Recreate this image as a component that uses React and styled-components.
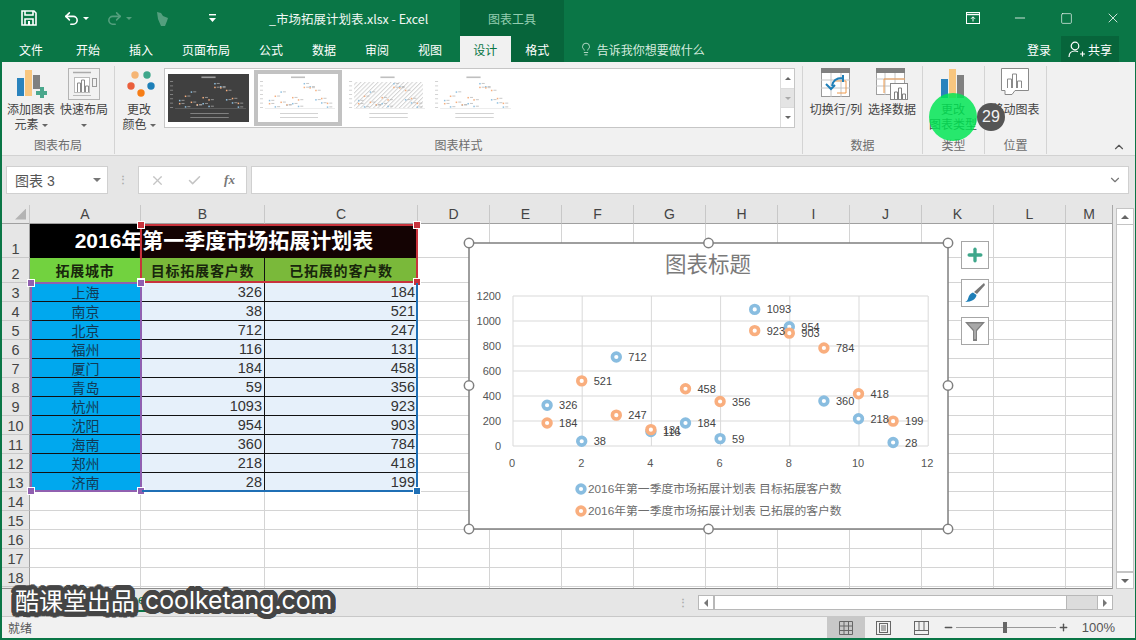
import React from 'react';
import styled, { createGlobalStyle } from 'styled-components';
import { Undo2, Redo2, Lightbulb, X, Check, ChevronDown, ChevronUp, Minus, Square, Plus } from 'lucide-react';

const CJK = '"Noto Sans CJK SC", "Liberation Sans", sans-serif';
const LATIN_CJK = '"Liberation Sans", "Noto Sans CJK SC", sans-serif';
const GREEN = '#0a7646';

// round dark halo behind the watermark letters
const halo = [];
for (let i = 0; i < 24; i++) {
  const a = (i / 24) * Math.PI * 2;
  halo.push(`${(Math.cos(a) * 5).toFixed(1)}px ${(Math.sin(a) * 5).toFixed(1)}px 0 #454545`);
  halo.push(`${(Math.cos(a) * 2.5).toFixed(1)}px ${(Math.sin(a) * 2.5).toFixed(1)}px 0 #454545`);
}

const GlobalStyle = createGlobalStyle`
  html, body {
    margin: 0;
    width: 1136px;
    height: 640px;
    overflow: hidden;
    background: #f1f1f1;
    font-family: ${LATIN_CJK};
  }
`;

const Root = styled.div`
  position: relative;
  width: 1136px;
  height: 640px;
  overflow: hidden;
`;

const Window = styled.div`
  box-sizing: border-box;
  width: 1136px;
  height: 640px;
  display: flex;
  flex-direction: column;
  border-left: 2px solid ${GREEN};
  border-right: 1px solid ${GREEN};
  border-bottom: 2px solid ${GREEN};
`;

/* title bar */
const TitleBar = styled.div`
  height: 36px;
  flex: none;
  background: ${GREEN};
  display: flex;
  align-items: center;
  color: #fff;
`;

const QuickIcon = styled.span`
  display: inline-flex;
  margin-left: ${p => p.$left}px;
  opacity: ${p => (p.$dim ? 0.3 : 1)};
`;

const DocTitle = styled.div`
  margin-left: ${p => p.$left}px;
  width: 191px;
  font: 12.5px ${CJK};
  color: #f1f8f4;
  white-space: nowrap;
`;

const ToolTab = styled.div`
  align-self: stretch;
  width: 104px;
  background: #07653b;
  color: #93cdb0;
  font: 12px ${CJK};
  display: flex;
  align-items: center;
  justify-content: center;
`;

const WinButtons = styled.div`
  margin-left: auto;
  margin-right: 14px;
  display: flex;
  align-items: center;
  gap: 32px;
`;

const Caret = styled.span`
  display: inline-block;
  width: 0;
  height: 0;
  border-left: ${p => p.$size || 3}px solid transparent;
  border-right: ${p => p.$size || 3}px solid transparent;
  ${p => (p.$up ? 'border-bottom' : 'border-top')}: ${p => p.$size || 3}px solid ${p => p.$color || '#666'};
  margin-left: ${p => p.$left || 0}px;
  vertical-align: middle;
`;

/* tabs */
const TabBar = styled.div`
  height: 26px;
  flex: none;
  background: ${GREEN};
  display: flex;
  align-items: stretch;
  padding-left: 2.5px;
`;

const Tab = styled.div`
  padding: 0 ${p => p.$pad || 14.5}px;
  display: flex;
  align-items: center;
  font: 12px ${CJK};
  color: ${p => (p.$active ? '#0a7646' : '#fff')};
  background: ${p => (p.$active ? '#f1f1f1' : p.$dark ? '#07653b' : 'transparent')};
  margin-left: ${p => p.$left || 0}px;

  &:first-child {
    margin-right: 4px;
  }
`;

const TellMe = styled.div`
  margin-left: 15px;
  display: flex;
  align-items: center;
  gap: 4px;
  color: #d5ebdf;
  font: 12px ${CJK};
`;

const Login = styled.div`
  margin-left: auto;
  margin-right: 10px;
  display: flex;
  align-items: center;
  color: #fff;
  font: 12px ${CJK};
`;

const ShareBtn = styled.div`
  width: 58px;
  margin-right: 16px;
  background: #07653b;
  color: #fff;
  font: 12px ${CJK};
  display: flex;
  align-items: center;
  justify-content: center;
  gap: 3px;
`;

/* ribbon */
const Ribbon = styled.div`
  height: 94px;
  flex: none;
  box-sizing: border-box;
  background: #f1f1f1;
  border-bottom: 1px solid #d2d2d2;
  display: flex;
  padding-top: 4px;
`;

const Group = styled.div`
  box-sizing: border-box;
  width: ${p => p.$width}px;
  height: 88px;
  flex: none;
  border-right: 1px solid #d4d4d4;
  display: flex;
  flex-direction: column;
`;

const GroupBody = styled.div`
  box-sizing: border-box;
  height: 70px;
  flex: none;
  padding: 2px 0 0 ${p => p.$pad || 0}px;
  display: flex;
  align-items: flex-start;
  gap: ${p => p.$gap || 0}px;
`;

const GroupLabel = styled.div`
  text-align: center;
  font: 12px/18px ${CJK};
  color: #6d6d6d;
`;

const RibbonBtn = styled.div`
  width: ${p => p.$width}px;
  flex: none;
  display: flex;
  flex-direction: column;
  align-items: center;
`;

const BtnIcon = styled.div`
  height: 33px;
  display: flex;
  align-items: flex-start;
  justify-content: center;
`;

const BtnText = styled.div`
  font: 12px/15px ${CJK};
  color: #444;
  text-align: center;
  white-space: nowrap;
`;

const Gallery = styled.div`
  box-sizing: border-box;
  width: 631px;
  height: 60px;
  margin-left: 7px;
  background: #fff;
  border: 1px solid #c6c6c6;
  display: flex;
  align-items: center;
`;

const Thumbs = styled.div`
  flex: 1;
  display: flex;
  align-items: center;
  padding-left: 3px;
  gap: 5px;
`;

const Thumb = styled.div`
  box-sizing: border-box;
  width: ${p => (p.$selected ? 88 : 81)}px;
  height: ${p => (p.$selected ? 56 : 48)}px;
  border: ${p => (p.$selected ? '4px solid #c2c2c2' : 'none')};
  flex: none;
  display: flex;
`;

const GalleryScroll = styled.div`
  align-self: stretch;
  width: 13px;
  flex: none;
  display: flex;
  flex-direction: column;
  border-left: 1px solid #dcdcdc;
`;

const ScrollCell = styled.div`
  flex: 1;
  display: flex;
  align-items: center;
  justify-content: center;
  background: ${p => (p.$grey ? '#e4e4e4' : '#fff')};
  border-bottom: ${p => (p.$last ? 'none' : '1px solid #dcdcdc')};
`;

const Collapse = styled.div`
  margin: auto 9px 0 auto;
  color: #555;
  display: flex;
  padding-bottom: 1px;
`;

/* formula bar */
const FormulaBand = styled.div`
  height: 49px;
  flex: none;
  background: #e6e6e6;
  display: flex;
  align-items: flex-start;
  padding: 10px 6px 0 4px;
  box-sizing: border-box;
`;

const NameBox = styled.div`
  box-sizing: border-box;
  width: 102px;
  height: 28px;
  background: #fff;
  border: 1px solid #d0d0d0;
  display: flex;
  align-items: center;
  justify-content: space-between;
  padding: 0 6px 0 8px;
  font: 14px ${LATIN_CJK};
  color: #555;
`;

const GripDots = styled.div`
  width: 30px;
  height: 28px;
  display: flex;
  align-items: center;
  justify-content: center;
  color: #aaa;
  font: bold 10px/4px ${LATIN_CJK};
`;

const FxBox = styled.div`
  box-sizing: border-box;
  width: 109px;
  height: 28px;
  background: #fff;
  border: 1px solid #d0d0d0;
  display: flex;
  align-items: center;
  justify-content: space-around;
  color: #c4c4c4;
`;

const FxText = styled.span`
  font: italic bold 13px "Liberation Serif", serif;
  color: #777;
`;

const FormulaInput = styled.div`
  box-sizing: border-box;
  flex: 1;
  height: 28px;
  margin-left: 4px;
  background: #fff;
  border: 1px solid #d0d0d0;
  display: flex;
  align-items: center;
  justify-content: flex-end;
  padding-right: 6px;
  color: #777;
`;

/* sheet */
const SheetArea = styled.div`
  height: 384px;
  flex: none;
  display: flex;
  background: #e6e6e6;
`;

const SheetGrid = styled.div`
  width: 1111px;
  height: 384px;
  overflow: hidden;
  display: grid;
  grid-template-columns: 28px 111px 124px 153px repeat(9, 72px) 47px;
  grid-template-rows: 18.5px 34px 25px repeat(16, 19px);
  background: #fff;
  border-bottom: 1px solid #8c8c8c;
  box-sizing: border-box;
  border-right: 1px solid #a8a8a8;
`;

const Corner = styled.div`
  background: #e6e6e6;
  border-bottom: 1px solid #a0a0a0;
  border-right: 1px solid #c8c8c8;
  display: flex;
  align-items: flex-end;
  justify-content: flex-end;
  padding: 0 3px 3px 0;
`;

const CornerMark = styled.span`
  width: 11px;
  height: 11px;
  background: #b4b4b4;
  clip-path: polygon(100% 0, 100% 100%, 0 100%);
`;

const ColHead = styled.div`
  background: #e6e6e6;
  border-bottom: 1px solid #a0a0a0;
  border-right: 1px solid #c8c8c8;
  font: 14px/19px ${LATIN_CJK};
  color: #444;
  text-align: center;
`;

const RowHead = styled.div`
  background: #e6e6e6;
  border-bottom: 1px solid #c8c8c8;
  border-right: 1px solid #a0a0a0;
  font: 14.5px ${LATIN_CJK};
  color: #444;
  display: flex;
  align-items: flex-end;
  justify-content: center;
`;

const Blank = styled.div`
  border-right: 1px solid #d4d4d4;
  border-bottom: 1px solid #d4d4d4;
`;

const TitleCell = styled.div`
  grid-column: span 3;
  background: linear-gradient(90deg, #000 28%, #140303 28%);
  color: #fff;
  font: bold 21px/34px ${LATIN_CJK};
  text-align: center;
  white-space: nowrap;
`;

const HeadCell = styled.div`
  background: ${p => p.$bg};
  color: #18260c;
  font: bold 14px/25px ${CJK};
  letter-spacing: 0.8px;
  text-align: center;
  border-right: 1px solid #111;
`;

const CityCell = styled.div`
  background: #00a8ee;
  color: #123a55;
  font: 14px/18px ${CJK};
  text-align: center;
  border-bottom: 1px solid #111;
  white-space: nowrap;
  overflow: hidden;
`;

const NumCell = styled.div`
  background: #e6f0fa;
  color: #333;
  font: 14.5px/19px "Liberation Sans", sans-serif;
  text-align: right;
  padding-right: 2px;
  border-bottom: 1px solid #111;
  border-right: 1px solid #111;
`;

const VScroll = styled.div`
  flex: 1;
  display: flex;
  flex-direction: column;
  padding: 3px 1px 0 3px;
`;

const VBtn = styled.div`
  height: 15px;
  flex: none;
  background: #fff;
  border: 1px solid #c4c4c4;
  display: flex;
  align-items: center;
  justify-content: center;
`;

const VThumb = styled.div`
  height: 346px;
  flex: none;
  background: #fff;
  border: 1px solid #c4c4c4;
  border-top: none;
`;

const VTrack = styled.div`
  flex: 1;
`;

/* sheet tabs */
const TabsBar = styled.div`
  height: 28px;
  flex: none;
  box-sizing: border-box;
  background: #e6e6e6;
  border-bottom: 1px solid #c8c8c8;
  display: flex;
  align-items: stretch;
`;

const SheetTab = styled.div`
  width: 70px;
  margin-left: ${p => p.$left || 0}px;
  box-sizing: border-box;
  display: flex;
  align-items: center;
  justify-content: center;
  font: 13px ${LATIN_CJK};
  color: ${p => (p.$active ? '#0a7646' : '#555')};
  border-bottom: ${p => (p.$active ? '2px solid #0a7646' : 'none')};
  border-right: 1px solid #bbb;
  margin-bottom: 4px;
`;

const HScrollWrap = styled.div`
  margin: 6px 22px 0 auto;
  display: flex;
  align-items: flex-start;
`;

const HDots = styled.div`
  width: 20px;
  color: #aaa;
  font: bold 10px/5px ${LATIN_CJK};
  padding-top: 5px;
`;

const HScroll = styled.div`
  box-sizing: border-box;
  width: 415px;
  height: 15px;
  display: flex;
  border: 1px solid #b8b8b8;
  background: #dcdcdc;
`;

const HBtn = styled.div`
  width: 14px;
  background: #fff;
  display: flex;
  align-items: center;
  justify-content: center;
  margin-left: ${p => (p.$end ? 'auto' : 0)};
  border-left: ${p => (p.$end ? '1px solid #b8b8b8' : 'none')};
`;

const HThumb = styled.div`
  width: 351px;
  background: #fff;
  border-left: 2px solid #b8b8b8;
  border-right: 1px solid #b8b8b8;
`;

const Arrow = styled.span`
  width: 0;
  height: 0;
  border-top: 4px solid transparent;
  border-bottom: 4px solid transparent;
  ${p => (p.$right ? 'border-left' : 'border-right')}: 4px solid #777;
`;

/* status bar */
const StatusBar = styled.div`
  flex: 1;
  background: #f1f1f1;
  display: flex;
  align-items: stretch;
  color: #555;
`;

const Ready = styled.div`
  margin-left: 6px;
  font: 12px ${CJK};
  display: flex;
  align-items: center;
`;

const ViewBtns = styled.div`
  margin-left: auto;
  display: flex;
  align-items: stretch;
`;

const ViewBtn = styled.div`
  width: 38px;
  display: flex;
  align-items: center;
  justify-content: center;
  background: ${p => (p.$active ? '#c8c8c8' : 'transparent')};
`;

const ZoomRow = styled.div`
  display: flex;
  align-items: center;
  margin-left: 2.5px;
  margin-right: 12.5px;
  gap: 2px;
`;

const ZoomTrack = styled.div`
  position: relative;
  width: 100px;
  height: 1px;
  background: #999;
`;

const ZoomThumb = styled.span`
  position: absolute;
  left: 47px;
  top: -5px;
  width: 4px;
  height: 11px;
  background: #666;
`;

const ZoomText = styled.div`
  align-self: center;
  margin-right: 20px;
  font: 13px "Liberation Sans", sans-serif;
  color: #555;
`;

/* overlays */
const Selection = styled.div`
  position: absolute;
  box-sizing: border-box;
  left: ${p => p.$x}px;
  top: ${p => p.$y}px;
  width: ${p => p.$w}px;
  height: ${p => p.$h}px;
  border: 2px solid ${p => p.$color};
  ${p => (p.$open ? 'border-left: none; border-top: none;' : '')}
  pointer-events: none;
`;

const Handle = styled.span`
  position: absolute;
  width: 6px;
  height: 6px;
  background: ${p => p.$color};
  border: 1px solid #fff;
  ${p => (p.$bottom ? 'bottom: -5px' : 'top: -5px')};
  ${p => (p.$right ? 'right: -5px' : 'left: -5px')};
`;

const ChartFrame = styled.div`
  position: absolute;
  left: 469px;
  top: 243px;
  width: 479px;
  height: 286px;
`;

const ChartSvg = styled.svg`
  display: block;
  overflow: visible;
`;

const SideBtn = styled.div`
  position: absolute;
  left: 961px;
  top: ${p => p.$y}px;
  box-sizing: border-box;
  width: 28px;
  height: 28px;
  background: #fff;
  border: 1px solid #a6a6a6;
  display: flex;
  align-items: center;
  justify-content: center;
`;

const Spot = styled.div`
  position: absolute;
  left: 929px;
  top: 93px;
  width: 48px;
  height: 48px;
  border-radius: 50%;
  background: rgba(0, 230, 84, 0.84);
`;

const Badge = styled.div`
  position: absolute;
  left: 977px;
  top: 103px;
  width: 28px;
  height: 28px;
  border-radius: 50%;
  background: #555;
  color: #f2f2f2;
  font: 16px/28px "Liberation Sans", sans-serif;
  text-align: center;
`;

const Watermark = styled.div`
  position: absolute;
  left: 15px;
  top: 582px;
  display: flex;
  gap: 10px;
  color: #fff;
  font: 24px/36px ${CJK};
  white-space: nowrap;
  text-shadow: ${halo.join(', ')};
`;

const WatermarkLatin = styled.span`
  font: 24.8px/36px "Inter", "Liberation Sans", sans-serif;
`;

const s1 = [326, 38, 712, 116, 184, 59, 1093, 954, 360, 218, 28];
const s2 = [184, 521, 247, 131, 458, 356, 923, 903, 784, 418, 199];
const cities = ['上海', '南京', '北京', '福州', '厦门', '青岛', '杭州', '沈阳', '海南', '郑州', '济南'];
const colLetters = ['D', 'E', 'F', 'G', 'H', 'I', 'J', 'K', 'L', 'M'];

const px = v => 513 + v * 34.6;
const py = v => 446 - v * 0.125;

const Save = () => (
  <svg width="16" height="16" viewBox="0 0 16 16" fill="none" stroke="#fff" strokeWidth="1.6">
    <path d="M1 1h12l2 2v12H1z" />
    <path d="M4 1v4h8V1M4 15V9h8v6" />
    <path d="M7 11h2v4H7z" fill="#fff" stroke="none" />
  </svg>
);

const TouchIcon = () => (
  <svg width="17" height="17" viewBox="0 0 17 17" fill="#fff">
    <path d="M3 2l4 1 2 3 5 2-1 3-2 5H7L4 9z" />
  </svg>
);

const Customize = () => (
  <svg width="9" height="9" viewBox="0 0 9 9" fill="#fff">
    <rect x="1" y="0" width="7" height="1.4" />
    <path d="M1 4h7L4.5 8z" />
  </svg>
);

const RestoreIcon = () => (
  <svg width="14" height="12" viewBox="0 0 14 12" fill="none" stroke="#fff">
    <rect x="0.5" y="0.5" width="13" height="11" />
    <path d="M0.5 2.5h13" strokeWidth="1.4" />
    <path d="M7 9.5V5M5 6.8L7 4.8l2 2" />
  </svg>
);

const UserIcon = () => (
  <svg width="17" height="17" viewBox="0 0 17 17" fill="none" stroke="#fff" strokeWidth="1.2">
    <circle cx="7" cy="5" r="3.8" />
    <path d="M1 16c0-4 2-6 6-6 1 0 2 .2 3 .7M12 13h5M14.5 10.5v5" />
  </svg>
);

const AddChartIcon = () => (
  <svg width="31" height="30" viewBox="0 0 31 30">
    <rect x="1" y="10" width="7" height="18" fill="#2a83bd" />
    <rect x="9" y="2" width="7" height="26" fill="#f8c67f" />
    <rect x="17" y="7" width="7" height="14" fill="#808080" />
    <path d="M20 23h4v-4h4v4h3v4h-3v3h-4v-3h-4z" fill="#4aa78c" />
  </svg>
);

const LayoutIcon = () => (
  <svg width="32" height="32" viewBox="0 0 32 32" fill="none" stroke="#8a8a8a">
    <rect x="0.5" y="0.5" width="31" height="31" stroke="#b4b4b4" />
    <path d="M5 4.5h18" strokeWidth="1.5" stroke="#aaa" />
    <rect x="6.5" y="9.5" width="15" height="15" fill="#fff" stroke="#bbb" />
    <path d="M9.5 24V15h3v9M13.5 24V12h3v12M17.5 24v-6h3v6" />
    <rect x="24.5" y="10.5" width="4" height="8" stroke="#999" />
    <path d="M5 27.5h18" stroke="#bbb" />
  </svg>
);

const ColorsIcon = () => (
  <svg width="36" height="30" viewBox="121 68 36 30">
    <circle cx="135" cy="75" r="3.7" fill="#f5b575" />
    <circle cx="147" cy="75" r="3.7" fill="#3fa78b" />
    <circle cx="131" cy="86" r="3.7" fill="#ea5f3c" />
    <circle cx="151" cy="86" r="3.7" fill="#1d7fb8" />
    <circle cx="141" cy="93" r="3.7" fill="#f67d16" />
  </svg>
);

const SwitchIcon = () => (
  <svg width="30" height="30" viewBox="0 0 30 30" fill="none" stroke="#9a9a9a">
    <rect x="0.5" y="0.5" width="28" height="28" fill="#fff" />
    <rect x="0" y="0" width="29" height="5" fill="#808080" stroke="none" />
    <path d="M0 12h29M0 20h29M10 5v24M20 5v24" stroke="#c4c4c4" />
    <path d="M14 13h11v12h-9" stroke="#ee9a4d" />
    <path d="M21 10c-5 0-9 2-10 8M5 16l5 5 4-4M22 7v7" stroke="#1f7fb8" strokeWidth="2" />
  </svg>
);

const SelectDataIcon = () => (
  <svg width="32" height="32" viewBox="0 0 32 32" fill="none" stroke="#a0a0a0">
    <rect x="0.5" y="0.5" width="28" height="26" fill="#fff" />
    <rect x="0" y="0" width="29" height="5" fill="#808080" stroke="none" />
    <path d="M0 11h29M0 18h29M9 5v22M19 5v22" stroke="#c4c4c4" />
    <path d="M29 11H8v14" stroke="#ee9a4d" />
    <rect x="14.5" y="15.5" width="17" height="16" fill="#fff" stroke="#8a8a8a" />
    <path d="M18.5 31V24h3v7M22.5 31V20h3v11M26.5 31v-5h3v5" stroke="#808080" />
  </svg>
);

const TypeIcon = () => (
  <svg width="24" height="30" viewBox="0 0 24 30">
    <rect x="0" y="11" width="7" height="19" fill="#2a83bd" />
    <rect x="8" y="1" width="7" height="29" fill="#f8c67f" />
    <rect x="16" y="7" width="7" height="23" fill="#808080" />
  </svg>
);

const MoveIcon = () => (
  <svg width="29" height="28" viewBox="0 0 29 28" fill="#fff" stroke="#8a8a8a">
    <path d="M0.5 0.5h27v22H14l-3 4H4v-4H0.5z" />
    <path d="M6.5 20v-9h4v9M11.5 20V6h4v14M16.5 20v-7h4v7" fill="none" />
  </svg>
);

const MiniChart = ({ dark, hatched }) => {
  const ink = dark ? '#c8c8c8' : '#a4a4a4';
  const pts = [...s1.map((v, i) => [i + 1, v]), ...s2.map((v, i) => [i + 1, v])];
  return (
    <svg width="100%" height="100%" viewBox="0 0 80 48" preserveAspectRatio="none">
      <defs>
        <pattern id="hatch" width="3" height="3" patternUnits="userSpaceOnUse" patternTransform="rotate(45)">
          <rect width="1" height="3" fill="#d4d4d4" />
        </pattern>
      </defs>
      <rect width="80" height="48" fill={dark ? '#404040' : '#fff'} />
      {hatched && <rect x="7" y="8" width="68" height="26" fill="url(#hatch)" />}
      <rect x="33" y="2.5" width="14" height="1.6" fill={ink} opacity="0.7" />
      {pts.map(([x, v], i) => (
        <g key={i}>
          <rect x={5 + x * 5.8} y={33 - v * 0.022} width="1.5" height="1.5" fill={i < 11 ? '#8fc0e0' : '#f5ae7e'} />
          <rect x={7.5 + x * 5.8} y={33 - v * 0.022} width="3" height="1" fill={ink} opacity="0.6" />
        </g>
      ))}
      {[0, 1, 2, 3, 4, 5, 6].map(i => (
        <rect key={i} x="2" y={33 - i * 4.3} width="3" height="0.8" fill={ink} opacity="0.6" />
      ))}
      <rect x="7" y="34" width="70" height="0.5" fill={ink} opacity="0.4" />
      <rect x="22" y="39" width="38" height="0.8" fill={ink} opacity="0.6" />
      <rect x="22" y="43" width="38" height="0.8" fill={ink} opacity="0.6" />
    </svg>
  );
};

const Marker = ({ x, y, color }) => (
  <circle cx={x} cy={y} r="3.9" fill="#fff" stroke={color} strokeWidth="3.6" />
);

const ChartHandles = () => (
  <>
    {[469, 708.5, 948].flatMap(x =>
      [243, 385.5, 529]
        .filter(y => !(x === 708.5 && y === 385.5))
        .map(y => (
          <circle key={`${x}-${y}`} cx={x} cy={y} r="4.7" fill="#fff" stroke="#7f7f7f" strokeWidth="1.5" />
        ))
    )}
  </>
);

const ScatterChart = () => (
  <ChartSvg width="479" height="286" viewBox="469 243 479 286" fontFamily={LATIN_CJK}>
    <rect x="469" y="243" width="479" height="286" fill="#fff" stroke="#7f7f7f" strokeWidth="1.5" />
    <text x="708" y="272" textAnchor="middle" fontSize="21.5" fill="#7a7a7a">图表标题</text>
    {[0, 200, 400, 600, 800, 1000, 1200].map(v => (
      <g key={v}>
        <line x1="513" x2="928" y1={py(v)} y2={py(v)} stroke="#d9d9d9" />
        <text x="501" y={py(v) + 4} textAnchor="end" fontSize="11" fill="#555">{v}</text>
      </g>
    ))}
    {[0, 2, 4, 6, 8, 10, 12].map(v => (
      <g key={v}>
        <line x1={px(v)} x2={px(v)} y1="296" y2="446" stroke="#d9d9d9" />
        <text x={px(v) - 1} y="467" textAnchor="middle" fontSize="11" fill="#555">{v}</text>
      </g>
    ))}
    {[[s1, '#89bde0'], [s2, '#f9ae7e']].map(([data, color], k) =>
      data.map((v, i) => <Marker key={`${k}-${i}`} x={px(i + 1) - 0.5} y={py(v)} color={color} />)
    )}
    {[s1, s2].map((data, k) =>
      data.map((v, i) => (
        <text key={`${k}-${i}`} x={px(i + 1) + 11.5} y={py(v) + 4} fontSize="11" fill="#444">{v}</text>
      ))
    )}
    <Marker x={581} y={489} color="#89bde0" />
    <text x="588" y="493" fontSize="11.8" fill="#6d6d6d">2016年第一季度市场拓展计划表 目标拓展客户数</text>
    <Marker x={581} y={511} color="#f9ae7e" />
    <text x="588" y="515" fontSize="11.8" fill="#6d6d6d">2016年第一季度市场拓展计划表 已拓展的客户数</text>
    <ChartHandles />
  </ChartSvg>
);

const BrushIcon = () => (
  <svg width="22" height="22" viewBox="0 0 22 22">
    <path d="M20 1l1 2-8 9-3-2z" fill="#777" />
    <path d="M9 10.5l3.5 2.5C12 17 8 20 1 20c3-1 3-4 4-6 1-2 2.5-3 4-3.5z" fill="#1f7fb8" />
  </svg>
);

const FilterIcon = () => (
  <svg width="22" height="22" viewBox="0 0 22 22">
    <path d="M1 2h20l-8 9v10H9V11z" fill="#808080" />
    <path d="M4 3.5h14L12 10v9h-2v-9z" fill="#a8a8a8" />
  </svg>
);

const GridViewIcon = () => (
  <svg width="14" height="14" viewBox="0 0 14 14" fill="none" stroke="#666">
    <path d="M.5.5h13v13H.5zM.5 5h13M.5 9.5h13M5 .5v13M9.5.5v13" />
  </svg>
);

const PageViewIcon = () => (
  <svg width="15" height="14" viewBox="0 0 15 14" fill="none" stroke="#666">
    <rect x=".5" y=".5" width="14" height="13" />
    <rect x="3.5" y="2.5" width="8" height="9" />
    <path d="M5 5h5M5 7h5M5 9h5" />
  </svg>
);

const BreakViewIcon = () => (
  <svg width="15" height="14" viewBox="0 0 15 14" fill="none" stroke="#666">
    <rect x=".5" y=".5" width="14" height="13" />
    <path d="M.5 9.5h14M5 .5v9M10 .5v9" />
  </svg>
);

const App = () => {
  const rows = [];
  for (let i = 0; i < 19; i++) {
    const n = i + 1;
    rows.push(<RowHead key={`h${n}`}>{n}</RowHead>);
    if (n === 1) {
      rows.push(<TitleCell key="title">2016年第一季度市场拓展计划表</TitleCell>);
    } else if (n === 2) {
      rows.push(<HeadCell key="a2" $bg="#72d23f">拓展城市</HeadCell>);
      rows.push(<HeadCell key="b2" $bg="#7ab93a">目标拓展客户数</HeadCell>);
      rows.push(<HeadCell key="c2" $bg="#7ab93a">已拓展的客户数</HeadCell>);
    } else if (n <= 13) {
      rows.push(<CityCell key={`a${n}`}>{cities[n - 3]}</CityCell>);
      rows.push(<NumCell key={`b${n}`}>{s1[n - 3]}</NumCell>);
      rows.push(<NumCell key={`c${n}`}>{s2[n - 3]}</NumCell>);
    } else {
      ['a', 'b', 'c'].forEach(c => rows.push(<Blank key={`${c}${n}`} />));
    }
    colLetters.forEach(c => rows.push(<Blank key={`${c}${n}`} />));
  }

  return (
    <Root>
      <GlobalStyle />
      <Window>
        <TitleBar>
          <QuickIcon $left={19}><Save /></QuickIcon>
          <QuickIcon $left={26}><Undo2 size={17} strokeWidth={2.2} /></QuickIcon>
          <QuickIcon $left={3}><Caret $color="#fff" /></QuickIcon>
          <QuickIcon $left={17} $dim><Redo2 size={17} strokeWidth={2.2} /></QuickIcon>
          <QuickIcon $left={3} $dim><Caret $color="#fff" /></QuickIcon>
          <QuickIcon $left={22} $dim><TouchIcon /></QuickIcon>
          <QuickIcon $left={37}><Customize /></QuickIcon>
          <DocTitle $left={52}>_市场拓展计划表.xlsx - Excel</DocTitle>
          <ToolTab>图表工具</ToolTab>
          <WinButtons>
            <RestoreIcon />
            <Minus size={16} strokeWidth={1.2} />
            <Square size={13} strokeWidth={1.2} />
            <X size={16} strokeWidth={1.2} />
          </WinButtons>
        </TitleBar>

        <TabBar>
          {['文件', '开始', '插入', '页面布局', '公式', '数据', '审阅', '视图'].map(t => (
            <Tab key={t}>{t}</Tab>
          ))}
          <Tab $active $pad={13.5} $left={3}>设计</Tab>
          <Tab $dark $pad={14.5}>格式</Tab>
          <TellMe>
            <Lightbulb size={14} strokeWidth={1.4} />
            告诉我你想要做什么
          </TellMe>
          <Login>登录</Login>
          <ShareBtn><UserIcon />共享</ShareBtn>
        </TabBar>

        <Ribbon>
          <Group $width={113}>
            <GroupBody $pad={5} $gap={5}>
              <RibbonBtn $width={48}>
                <BtnIcon><AddChartIcon /></BtnIcon>
                <BtnText>添加图表<br />元素<Caret $left={3} /></BtnText>
              </RibbonBtn>
              <RibbonBtn $width={48}>
                <BtnIcon><LayoutIcon /></BtnIcon>
                <BtnText>快速布局<br /><Caret /></BtnText>
              </RibbonBtn>
            </GroupBody>
            <GroupLabel>图表布局</GroupLabel>
          </Group>
          <Group $width={688}>
            <GroupBody $pad={6}>
              <RibbonBtn $width={36}>
                <BtnIcon><ColorsIcon /></BtnIcon>
                <BtnText>更改<br />颜色<Caret $left={3} /></BtnText>
              </RibbonBtn>
              <Gallery>
                <Thumbs>
                  <Thumb><MiniChart dark /></Thumb>
                  <Thumb $selected><MiniChart /></Thumb>
                  <Thumb><MiniChart hatched /></Thumb>
                  <Thumb><MiniChart /></Thumb>
                </Thumbs>
                <GalleryScroll>
                  <ScrollCell><Caret $up /></ScrollCell>
                  <ScrollCell $grey><Caret $color="#aaa" /></ScrollCell>
                  <ScrollCell $last><Caret /></ScrollCell>
                </GalleryScroll>
              </Gallery>
            </GroupBody>
            <GroupLabel>图表样式</GroupLabel>
          </Group>
          <Group $width={120}>
            <GroupBody $pad={7} $gap={6}>
              <RibbonBtn $width={52}>
                <BtnIcon><SwitchIcon /></BtnIcon>
                <BtnText>切换行/列</BtnText>
              </RibbonBtn>
              <RibbonBtn $width={48}>
                <BtnIcon><SelectDataIcon /></BtnIcon>
                <BtnText>选择数据</BtnText>
              </RibbonBtn>
            </GroupBody>
            <GroupLabel>数据</GroupLabel>
          </Group>
          <Group $width={62}>
            <GroupBody>
              <RibbonBtn $width={60}>
                <BtnIcon><TypeIcon /></BtnIcon>
                <BtnText>更改<br />图表类型</BtnText>
              </RibbonBtn>
            </GroupBody>
            <GroupLabel>类型</GroupLabel>
          </Group>
          <Group $width={62}>
            <GroupBody>
              <RibbonBtn $width={61}>
                <BtnIcon><MoveIcon /></BtnIcon>
                <BtnText>移动图表</BtnText>
              </RibbonBtn>
            </GroupBody>
            <GroupLabel>位置</GroupLabel>
          </Group>
          <Collapse><ChevronUp size={14} strokeWidth={2} /></Collapse>
        </Ribbon>

        <FormulaBand>
          <NameBox>图表 3<Caret $size={4} $color="#777" /></NameBox>
          <GripDots>⋮</GripDots>
          <FxBox>
            <X size={15} strokeWidth={2} />
            <Check size={15} strokeWidth={2.4} />
            <FxText>fx</FxText>
          </FxBox>
          <FormulaInput><ChevronDown size={14} strokeWidth={2} /></FormulaInput>
        </FormulaBand>

        <SheetArea>
          <SheetGrid>
            <Corner><CornerMark /></Corner>
            {['A', 'B', 'C', ...colLetters].map(c => <ColHead key={c}>{c}</ColHead>)}
            {rows}
          </SheetGrid>
          <VScroll>
            <VBtn><Caret $up $size={4} /></VBtn>
            <VThumb />
            <VTrack />
            <VBtn><Caret $size={4} /></VBtn>
          </VScroll>
        </SheetArea>

        <TabsBar>
          <SheetTab $active $left={99}>Sheet1</SheetTab>
          <SheetTab>Sheet2</SheetTab>
          <HScrollWrap>
            <HDots>⋮</HDots>
            <HScroll>
              <HBtn><Arrow /></HBtn>
              <HThumb />
              <HBtn $end><Arrow $right /></HBtn>
            </HScroll>
          </HScrollWrap>
        </TabsBar>

        <StatusBar>
          <Ready>就绪</Ready>
          <ViewBtns>
            <ViewBtn $active><GridViewIcon /></ViewBtn>
            <ViewBtn><PageViewIcon /></ViewBtn>
            <ViewBtn><BreakViewIcon /></ViewBtn>
          </ViewBtns>
          <ZoomRow>
            <Minus size={11} strokeWidth={3} />
            <ZoomTrack><ZoomThumb /></ZoomTrack>
            <Plus size={11} strokeWidth={3} />
          </ZoomRow>
          <ZoomText>100%</ZoomText>
        </StatusBar>
      </Window>

      <Selection $x={140} $y={224} $w={278} $h={59} $color="#c8333c">
        <Handle $color="#c8333c" />
        <Handle $color="#c8333c" $right />
        <Handle $color="#c8333c" $bottom />
        <Handle $color="#c8333c" $bottom $right />
      </Selection>
      <Selection $x={30} $y={282} $w={112} $h={210} $color="#9060b0">
        <Handle $color="#9060b0" />
        <Handle $color="#9060b0" $right />
        <Handle $color="#9060b0" $bottom />
        <Handle $color="#9060b0" $bottom $right />
      </Selection>
      <Selection $open $x={142} $y={283} $w={276} $h={209} $color="#1f6fb5">
        <Handle $color="#1f6fb5" $bottom $right />
      </Selection>

      <ChartFrame><ScatterChart /></ChartFrame>
      <SideBtn $y={241}><Plus size={20} strokeWidth={4} color="#3fa78b" /></SideBtn>
      <SideBtn $y={279}><BrushIcon /></SideBtn>
      <SideBtn $y={317}><FilterIcon /></SideBtn>

      <Spot />
      <Badge>29</Badge>

      <Watermark>
        <span>酷课堂出品</span>
        <WatermarkLatin>coolketang.com</WatermarkLatin>
      </Watermark>
    </Root>
  );
};

export default App;
